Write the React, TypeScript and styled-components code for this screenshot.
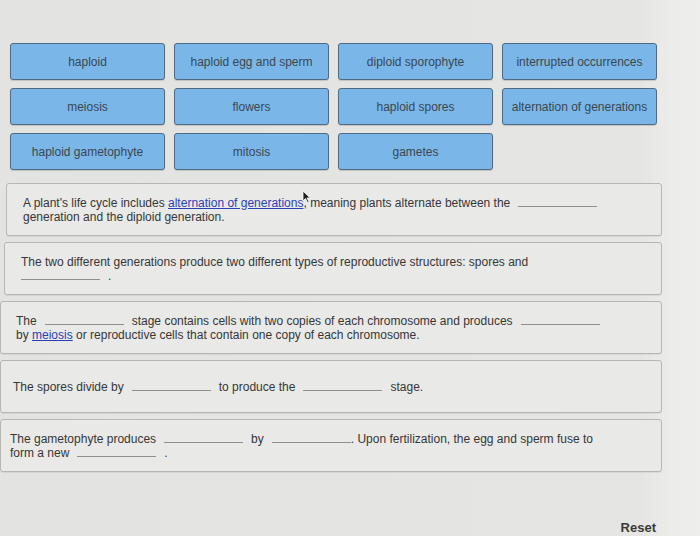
import React from "react";
import styled, { createGlobalStyle } from "styled-components";

const GlobalStyle = createGlobalStyle`
  html, body {
    margin: 0;
    padding: 0;
    background: #e3e3e1;
    font-family: "Liberation Sans", Arial, sans-serif;
    color: #3a3a3a;
  }
`;

const Page = styled.div`
  position: relative;
  width: 700px;
  height: 536px;
  overflow: hidden;
  box-sizing: border-box;
  padding: 43px 0 0 0;
  background: linear-gradient(90deg, #e3e3e1 0, #e5e5e3 640px, #ebebea 668px, #eeeeed 700px);
`;

const Bank = styled.div`
  display: grid;
  grid-template-columns: repeat(4, 155px);
  grid-auto-rows: 37px;
  column-gap: 9px;
  row-gap: 8px;
  padding-left: 10px;
`;

const Chip = styled.div`
  display: flex;
  align-items: center;
  justify-content: center;
  box-sizing: border-box;
  background: #7ab7e8;
  border: 1px solid #4f6a84;
  border-radius: 3px;
  box-shadow: 0 1px 1px rgba(0, 0, 0, 0.15);
  font-size: 12px;
  color: #3b4650;
  white-space: nowrap;
`;

const Questions = styled.div`
  display: flex;
  flex-direction: column;
  gap: 6px;
  margin-top: 13px;
  width: 662px;
`;

const Card = styled.div<{ $shift: number; $pad: number }>`
  display: flex;
  align-items: center;
  box-sizing: border-box;
  min-height: 53px;
  margin-left: ${(p) => p.$shift}px;
  padding: 4px 40px 4px ${(p) => p.$pad}px;
  background: #e9e9e8;
  border: 1px solid #b6b6b4;
  border-radius: 3px;
  box-shadow: 0 1px 0 rgba(0, 0, 0, 0.06);
  font-size: 12px;
  line-height: 14px;
  color: #363636;
`;

const Text = styled.p`
  margin: 0;
`;

const Blank = styled.span<{ $w?: number }>`
  display: inline-block;
  width: ${(p) => p.$w ?? 79}px;
  height: 10px;
  margin: 0 8px;
  border-bottom: 1px solid #8f8f8f;
  vertical-align: baseline;
`;

const Term = styled.a`
  color: #2b3fb5;
  text-decoration: underline;
`;

const Footer = styled.div`
  display: flex;
  justify-content: flex-end;
  width: 656px;
  margin-top: 48px;
`;

const Reset = styled.span`
  font-size: 13px;
  font-weight: bold;
  color: #3a3a3a;
`;

const Cursor = styled.svg`
  position: absolute;
  left: 302px;
  top: 190px;
`;

const chips = [
  "haploid",
  "haploid egg and sperm",
  "diploid sporophyte",
  "interrupted occurrences",
  "meiosis",
  "flowers",
  "haploid spores",
  "alternation of generations",
  "haploid gametophyte",
  "mitosis",
  "gametes",
];

export default function App() {
  return (
    <Page>
      <GlobalStyle />
      <Bank>
        {chips.map((c) => (
          <Chip key={c}>{c}</Chip>
        ))}
      </Bank>
      <Questions>
        <Card $shift={6} $pad={16}>
          <Text>
            A plant's life cycle includes <Term>alternation of generations</Term>, meaning plants alternate between the
            <Blank />
            <br />
            generation and the diploid generation.
          </Text>
        </Card>
        <Card $shift={4} $pad={16}>
          <Text>
            The two different generations produce two different types of reproductive structures: spores and
            <br />
            <Blank style={{ marginLeft: 0 }} />.
          </Text>
        </Card>
        <Card $shift={0} $pad={15}>
          <Text>
            The
            <Blank />
            stage contains cells with two copies of each chromosome and produces
            <Blank />
            <br />
            by <Term>meiosis</Term> or reproductive cells that contain one copy of each chromosome.
          </Text>
        </Card>
        <Card $shift={0} $pad={12}>
          <Text>
            The spores divide by
            <Blank />
            to produce the
            <Blank />
            stage.
          </Text>
        </Card>
        <Card $shift={0} $pad={9}>
          <Text>
            The gametophyte produces
            <Blank />
            by
            <Blank style={{ marginRight: 0 }} />. Upon fertilization, the egg and sperm fuse to
            <br />
            form a new
            <Blank />.
          </Text>
        </Card>
      </Questions>
      <Footer>
        <Reset>Reset</Reset>
      </Footer>
      <Cursor width="9" height="13" viewBox="0 0 9 13">
        <path d="M1 1 L1 11 L3.5 8.5 L5.5 12.5 L7 11.8 L5 8 L8.2 8 Z" fill="#222" stroke="#fff" strokeWidth="0.8" />
      </Cursor>
    </Page>
  );
}
